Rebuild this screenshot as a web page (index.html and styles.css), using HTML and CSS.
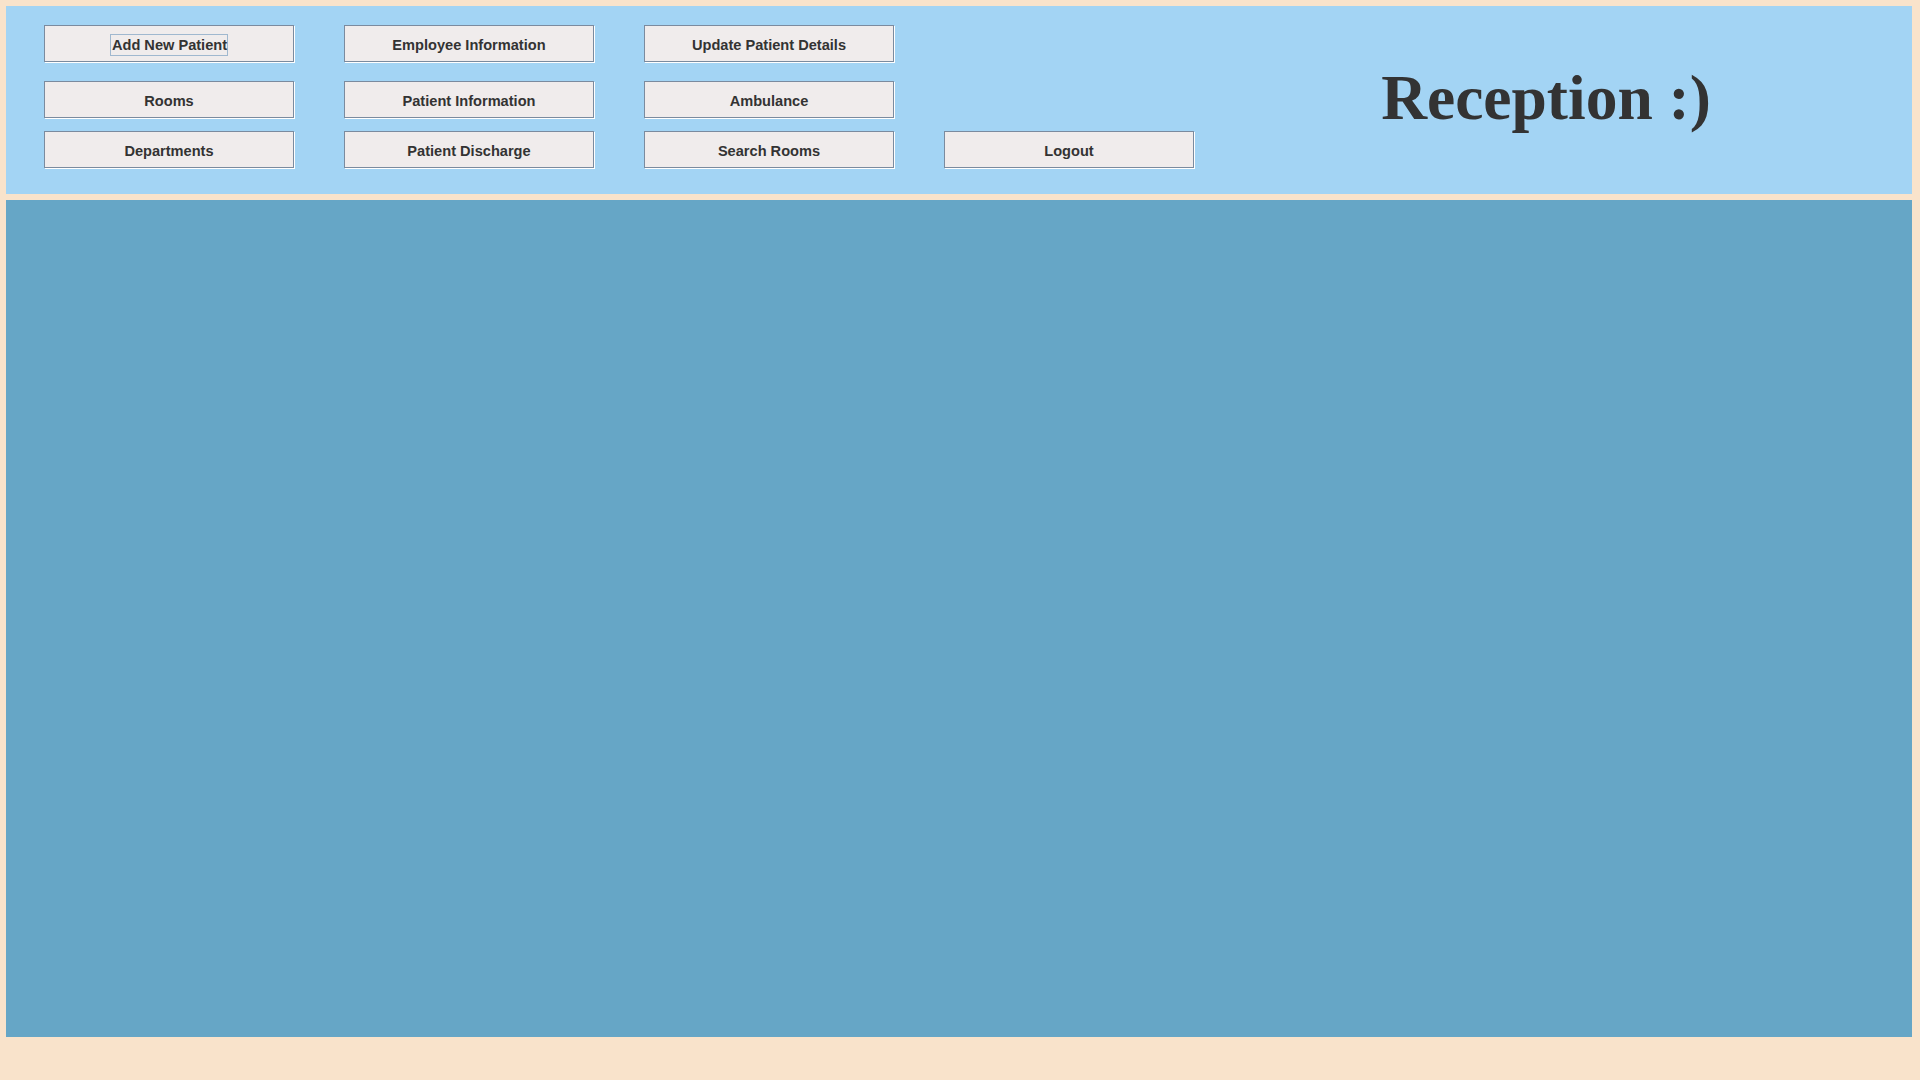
FILE: index.html
```html
<!DOCTYPE html>
<html>
<head>
<meta charset="utf-8">
<title>Reception</title>
<link rel="stylesheet" href="styles.css">
</head>
<body>
<div class="frame">
  <header class="top">
    <div class="grid">
      <button class="btn r1"><span class="focus">Add New Patient</span></button>
      <button class="btn r1">Employee Information</button>
      <button class="btn r1">Update Patient Details</button>
      <div class="empty r1"></div>
      <button class="btn r2">Rooms</button>
      <button class="btn r2">Patient Information</button>
      <button class="btn r2">Ambulance</button>
      <div class="empty r2"></div>
      <button class="btn r3">Departments</button>
      <button class="btn r3">Patient Discharge</button>
      <button class="btn r3">Search Rooms</button>
      <button class="btn r3">Logout</button>
    </div>
    <div class="title-area">
      <h1 class="title">Reception :)</h1>
    </div>
  </header>
  <main class="content"></main>
</div>
</body>
</html>
```

FILE: styles.css
```css
html, body {
  margin: 0;
  padding: 0;
  background: #f9e3cb;
  width: 1920px;
  height: 1080px;
  overflow: hidden;
}

.frame {
  padding: 6px 8px 0 6px;
  display: flex;
  flex-direction: column;
  gap: 6px;
}

.top {
  background: #a3d4f4;
  height: 188px;
  display: flex;
}

.grid {
  display: grid;
  grid-template-columns: repeat(4, 250px);
  column-gap: 50px;
  padding: 19px 0 0 38px;
  align-content: start;
}

.btn {
  height: 37px;
  width: 250px;
  box-sizing: border-box;
  margin: 0;
  padding: 0;
  background: #f0ecec;
  border: 1px solid #7b8b9f;
  box-shadow: 1px 1px 0 #ffffff;
  font-family: "Liberation Sans", Arial, sans-serif;
  font-weight: bold;
  font-size: 14.6px;
  color: #333333;
  display: flex;
  align-items: center;
  justify-content: center;
  padding-top: 2px;
}

.empty { height: 37px; }

.r2 { margin-top: 19px; }
.r3 { margin-top: 13px; }

.focus {
  border: 1px solid #a0b8cf;
  padding: 2px 0 1px 1px;
  line-height: 17px;
}

.title-area {
  flex: 1;
  display: flex;
  align-items: center;
  justify-content: center;
  padding-right: 14px;
}

.title {
  margin: -5px 0 0 0;
  font-family: "Liberation Serif", "Times New Roman", serif;
  font-weight: bold;
  font-size: 63.5px;
  color: #333333;
  line-height: 1;
}

.content {
  background: #66a6c6;
  height: 837px;
}
```
